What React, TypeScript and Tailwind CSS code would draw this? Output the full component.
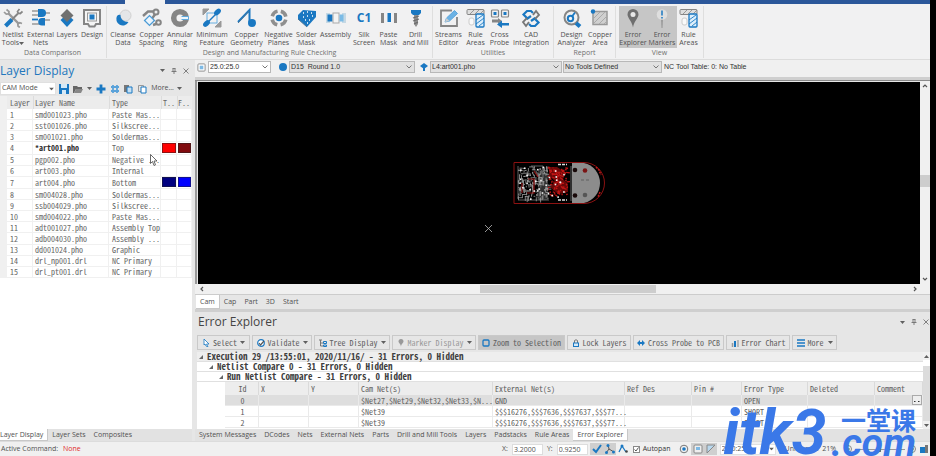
import React from "react";

const MONO = "font-['Noto_Sans_Mono_CJK_SC','Liberation_Mono',monospace]";
const UI = "font-['Open_Sans','Noto_Sans',sans-serif]";
const ARIAL = "font-['Liberation_Sans',Arial,sans-serif]";

const B = "#1a78c2";
const G = "#858585";

type IconProps = { children: React.ReactNode; className?: string; box?: number };

function Icon({ children, className = "size-5", box = 20 }: IconProps) {
  return (
    <svg viewBox={`0 0 ${box} ${box}`} className={`shrink-0 ${className}`} fill="none" aria-hidden="true">
      {children}
    </svg>
  );
}

const icons: Record<string, React.ReactNode> = {
  tools: (
    <>
      <path d="M5 5l11 11" stroke="#999" strokeWidth="2.400" />
      <path d="M3.500 1.500l2.500 2-.3 2.300-2.400.4L1 4M19 15.500l-2.200-.8-2 1 .2 2.300 1.800 1.500" stroke="#999" strokeWidth="1.700" />
      <path d="M16.500 1L14.500 3.500l.8 1.700 2 .3L19.500 3.500" stroke={G} strokeWidth="1.700" />
      <path d="M15 5.500L8.500 12" stroke={G} strokeWidth="2" />
      <path d="M9 11.500L2.500 18" stroke={B} strokeWidth="4" />
    </>
  ),
  nets: (
    <>
      <path d="M1 3h8M1 7h7M11 12h8M1 16h8M14 5h5" stroke="#999" strokeWidth="1.300" />
      <path d="M7 1h4a4 4 0 010 8H7z" fill={B} />
      <path d="M14 10h-3a3.800 3.800 0 000 7.600h3z" fill={B} />
      <path d="M1 11.500h6" stroke={B} strokeWidth="1.800" />
    </>
  ),
  layers: (
    <>
      <path d="M10 6l6.500 6L10 19l-6.500-7z" fill={B} />
      <path d="M10 1l6.500 6.500L10 14 3.500 7.500z" fill="#707070" />
    </>
  ),
  design: (
    <>
      <path d="M2 2h16v14h-4l-1.500 2.500h-5L6 16H2z" fill="#f5f5f5" stroke={G} strokeWidth="2" />
      <rect x="5.500" y="5" width="9" height="8" stroke="#9a9a9a" />
      <rect x="7.500" y="6.500" width="5" height="5" fill={B} />
    </>
  ),
  cleanse: (
    <>
      <circle cx="12.500" cy="7.500" r="5.500" fill="#e4e6e8" stroke="#d0d0d0" />
      <path d="M4 8a6 6 0 0011.500 6C10.500 14 7.500 11 7.500 7 6 6.500 5 7 4 8z" fill={B} />
    </>
  ),
  spacing: (
    <>
      <path d="M1 8l5-4.500h7M11 17l6-2M14 5l-5 7" stroke={G} strokeWidth="2.400" />
      <circle cx="14" cy="4" r="2.500" fill="#eee" stroke={G} strokeWidth="2" />
      <circle cx="16.500" cy="14.500" r="2.300" fill="#eee" stroke={G} strokeWidth="2" />
      <rect x="4" y="9" width="7" height="7" transform="rotate(45 7.500 12.500)" fill="#eaf4fc" stroke="#4b9bd6" strokeWidth="1.300" />
    </>
  ),
  annular: (
    <>
      <circle cx="10" cy="10" r="6.300" stroke={G} strokeWidth="5.500" />
      <path d="M11.500 8.500h7v3h-7" fill="#eef6fc" stroke="#60a8dc" />
    </>
  ),
  minimum: (
    <>
      <path d="M1 7l6-6H1zM19 13l-6 6h6z" stroke="#999" fill="#999" />
      <rect x="5" y="5" width="10" height="10" stroke="#67aee0" />
      <path d="M3 17L17 3" stroke={B} strokeWidth="1.500" />
      <ellipse cx="15.500" cy="4" rx="4" ry="2.600" transform="rotate(-45 15.500 4)" fill={B} />
      <ellipse cx="4.500" cy="15.500" rx="4" ry="2.600" transform="rotate(-45 4.500 15.500)" fill={B} />
    </>
  ),
  geometry: (
    <>
      <path d="M1 14L12.500 2v12" stroke={B} strokeWidth="2" />
      <path d="M1 15L12 3" stroke="#4d7697" />
      <circle cx="15" cy="15" r="4" fill={B} />
    </>
  ),
  negative: (
    <>
      <circle cx="10" cy="10" r="7" stroke="#8f8f8f" strokeWidth="3.500" strokeDasharray="7.600 3.396" strokeDashoffset="9.300" />
      <circle cx="10" cy="10" r="3.300" fill={B} />
    </>
  ),
  solder: (
    <>
      <path d="M1 7l5-5 13 1v6l-9 10L1 11z" fill={B} />
      <path d="M1 11l9 8" stroke="#4d7697" />
      <path d="M6 5h1M10 4h1M14 5h1M6 9h1M10 8h1M15 8h1M8 12h1M12 12h1M10 15h1" stroke="#fff" strokeWidth="1.300" />
    </>
  ),
  assembly: (
    <>
      <path d="M0 5h4v10H0zM16 5h4v10h-4z" fill="#c5d8e4" />
      <rect x="1.500" y="6.500" width="5" height="7" fill={B} />
      <rect x="7" y="5" width="6" height="10" fill="#f4f4f4" stroke="#aaa" />
      <rect x="13.500" y="6.500" width="4" height="7" fill="#7bbbe6" />
    </>
  ),
  paste: (
    <>
      <rect x="2" y="5" width="3" height="10" fill={G} />
      <rect x="8.500" y="5" width="3.500" height="9" fill={B} />
      <rect x="15" y="5" width="3" height="10" fill={G} />
    </>
  ),
  drill: (
    <>
      <path d="M5 2h10v3l-2 2H7L5 5z" fill={B} />
      <path d="M8 7h4v9l-2 3-2-3z" fill="#8f8f8f" />
      <path d="M7 10l6-2M7 13l6-2M8 16l4-2" stroke="#6b6b6b" strokeWidth="1.200" />
    </>
  ),
  streams: (
    <>
      <path d="M13 2.500H2v15.500h16V9" stroke={G} strokeWidth="1.800" />
      <path d="M6 14l1.500-4L15.500 2.500l3 3L10.500 13z" fill="#6cb2e4" stroke="#5aa6dd" />
      <path d="M6 14l1.500-4 3 3z" fill="#ccc" />
    </>
  ),
  rules: (
    <>
      <rect x="1" y="1.500" width="17" height="5" rx="1" fill="#dedede" stroke={G} />
      <path d="M4 6l4-4M9 6l4-4M14 6l4-4" stroke={G} strokeWidth=".8" />
      <rect x="3" y="10" width="5" height="7" rx="2" fill="#fafafa" stroke="#ccc" />
      <rect x="10" y="6" width="8" height="13" rx="1" fill="#dceefb" stroke={B} strokeWidth="1.300" />
      <path d="M10 12l7-5M10 16l8-6M13 18l5-4" stroke={B} strokeWidth=".9" />
    </>
  ),
  probe: (
    <>
      <rect x="1.500" y="2" width="7" height="7" rx="1" stroke={G} strokeWidth="1.200" />
      <rect x="11.500" y="2" width="7" height="7" rx="1" stroke={G} strokeWidth="1.200" />
      <path d="M3.500 4h3v3h-3zM13.500 4h3v3h-3z" fill={B} />
      <path d="M2 11.500h6V10l4 3-4 3v-1.500H2z" fill={G} />
      <path d="M19 15h-7v-2.500L7 16.500l5 3.500v-2.500h7z" fill={B} />
    </>
  ),
  cad: (
    <>
      <path d="M10 8L6.500 10.500 2.500 6.500 6 3h4l2 2" stroke={B} strokeWidth="2.200" />
      <path d="M10 13l3.500-2.500 4 4L14 18h-4l-2-2" stroke={B} strokeWidth="2.200" />
      <path d="M12 7l3-4 3 4-4 4M8 14l-3 4-3-4 4-4" stroke="#777" strokeWidth="1.800" />
    </>
  ),
  analyzer: (
    <>
      <circle cx="9.500" cy="9.500" r="7" stroke={G} strokeWidth="2" />
      <circle cx="8.500" cy="10.500" r="2.700" stroke={B} strokeWidth="2" />
      <path d="M10 8.500l3-4" stroke={B} strokeWidth="1.800" />
      <path d="M14 15l4 3.500" stroke={B} strokeWidth="4" />
    </>
  ),
  area: (
    <>
      <rect x="3" y="3.500" width="14" height="13" fill="#d0d0d0" stroke="#999" strokeWidth="1.500" />
      <path d="M4 10l6-6M4 15L15 4M9 16l8-8M14 16l3-3" stroke="#aaa" />
      <circle cx="3" cy="3.500" r="2.200" fill={B} />
    </>
  ),
  explorer: (
    <>
      <path d="M10 1a5.500 5.500 0 015.500 5.500C15.500 10 11 13 10 19.500 9 13 4.500 10 4.500 6.500A5.500 5.500 0 0110 1z" fill="#6f6f6f" />
      <circle cx="10" cy="6.500" r="2.500" fill="#e8e8e8" />
    </>
  ),
  markers: (
    <>
      <path d="M9 11h2l-.5 9h-1z" fill="#999" />
      <circle cx="10" cy="6.500" r="5.300" fill="#dedede" />
      <path d="M10 2.500v5M10 9v1.500" stroke={B} strokeWidth="1.500" />
    </>
  ),
};

type Tool = { icon: string; a: string; b?: string; w: string; on?: boolean; drop?: boolean };

const groups: { title: string; cls: string; tools: Tool[] }[] = [
  {
    title: "Data Comparison",
    cls: "w-[107px] pr-px",
    tools: [
      { icon: "tools", a: "Netlist", b: "Tools", w: "w-[26px]", drop: true },
      { icon: "nets", a: "External", b: "Nets", w: "w-[29px]" },
      { icon: "layers", a: "Layers", w: "w-[24px]" },
      { icon: "design", a: "Design", w: "w-[26px]" },
    ],
  },
  {
    title: "Design and Manufacturing Rule Checking",
    cls: "w-[326px]",
    tools: [
      { icon: "cleanse", a: "Cleanse", b: "Data", w: "w-[29px]" },
      { icon: "spacing", a: "Copper", b: "Spacing", w: "w-[28px]" },
      { icon: "annular", a: "Annular", b: "Ring", w: "w-[29px]" },
      { icon: "minimum", a: "Minimum", b: "Feature", w: "w-[35px]" },
      { icon: "geometry", a: "Copper", b: "Geometry", w: "w-[34px]" },
      { icon: "negative", a: "Negative", b: "Planes", w: "w-[30px]" },
      { icon: "solder", a: "Solder", b: "Mask", w: "w-[26px]" },
      { icon: "assembly", a: "Assembly", w: "w-[32px]" },
      { icon: "silk", a: "Silk", b: "Screen", w: "w-[25px]" },
      { icon: "paste", a: "Paste", b: "Mask", w: "w-[24px]" },
      { icon: "drill", a: "Drill", b: "and Mill", w: "w-[30px]" },
    ],
  },
  {
    title: "Utilities",
    cls: "w-[121px]",
    tools: [
      { icon: "streams", a: "Streams", b: "Editor", w: "w-[28px]" },
      { icon: "rules", a: "Rule", b: "Areas", w: "w-[26px]" },
      { icon: "probe", a: "Cross", b: "Probe", w: "w-[22px]" },
      { icon: "cad", a: "CAD", b: "Integration", w: "w-[41px]" },
    ],
  },
  {
    title: "Report",
    cls: "w-[62px]",
    tools: [
      { icon: "analyzer", a: "Design", b: "Analyzer", w: "w-[31px]" },
      { icon: "area", a: "Copper", b: "Area", w: "w-[26px]" },
    ],
  },
  {
    title: "View",
    cls: "w-[88px]",
    tools: [
      { icon: "explorer", a: "Error", b: "Explorer", w: "w-[29px]", on: true },
      { icon: "markers", a: "Error", b: "Markers", w: "w-[29px]", on: true },
      { icon: "rules", a: "Rule", b: "Areas", w: "w-[24px]" },
    ],
  },
];

function Ribbon() {
  return (
    <nav aria-label="Ribbon" className="flex h-14 border-b border-[#dcdcdc] bg-[#f1f1f2] text-[7px] leading-[8px] text-[#505050]">
      {groups.map((g) => (
        <section key={g.title} className={`mt-[2px] mb-px flex shrink-0 flex-col items-center border-r border-[#dedede] ${g.cls}`}>
          <div className="flex">
            {g.tools.map((t, i) => (
              <button
                key={i}
                className={`flex h-[42px] flex-col items-center whitespace-nowrap pt-[2px] ${t.w} ${t.on ? "bg-[#c6c6c6]" : ""}`}
              >
                {t.icon === "silk" ? (
                  <span className="flex h-5 items-center text-[12px] font-bold text-[#1a78c2]">C1</span>
                ) : (
                  <Icon>{icons[t.icon]}</Icon>
                )}
                <span className="mt-[3px] flex w-0 justify-center">{t.a}</span>
                {t.b && (
                  <span className="flex w-0 items-center justify-center">
                    {t.b}
                    {t.drop && <Caret />}
                  </span>
                )}
              </button>
            ))}
          </div>
          <h2 className="mt-px whitespace-nowrap text-[#707070]">{g.title}</h2>
        </section>
      ))}
    </nav>
  );
}

function Caret({ className = "" }: { className?: string }) {
  return (
    <svg viewBox="0 0 5 3" className={`h-[3px] w-[5px] shrink-0 ${className}`} aria-hidden="true">
      <path d="M0 0h5L2.500 3z" fill="#606060" />
    </svg>
  );
}

function Combo({ label, value, className, solid }: { label: string; value: string; className: string; solid?: boolean }) {
  return (
    <div className={`relative shrink-0 ${className}`}>
      <select
        aria-label={label}
        className={`block h-full w-full appearance-none border bg-inherit pl-px outline-none ${solid ? "border-[#e0e0e0]" : "border-[#b8b8b8]"}`}
      >
        <option>{value}</option>
      </select>
      {solid ? (
        <Caret className="pointer-events-none absolute right-[2px] top-1/2 -translate-y-1/2" />
      ) : (
        <svg viewBox="0 0 6 4" className="pointer-events-none absolute right-[3px] top-1/2 h-1 w-[6px] -translate-y-1/2" aria-hidden="true">
          <path d="M.5.5L3 3 5.500.5" fill="none" stroke="#777" />
        </svg>
      )}
    </div>
  );
}

function PanelButtons() {
  return (
    <div className="flex h-[20px] items-center gap-[6px] text-[#666]">
      <button aria-label="Panel menu"><Caret className="block" /></button>
      <button aria-label="Pin panel">
        <Icon box={6} className="block size-[6px]"><path d="M1.500.5h3M2 .5v3M4 .5v3M.5 3.500h5M3 3.500v2.500" stroke="#666" strokeWidth=".8" /></Icon>
      </button>
      <button aria-label="Close panel">
        <Icon box={6} className="block size-[6px]"><path d="M.5.5l5 5M5.500.5l-5 5" stroke="#666" strokeWidth=".8" /></Icon>
      </button>
    </div>
  );
}

const layers: [string, string, string?, string?][] = [
  ["smd001023.pho", "Paste Mas..."],
  ["sst001026.pho", "Silkscree..."],
  ["sm001021.pho", "Soldermas..."],
  ["*art001.pho", "Top", "bg-[#ff0000]", "bg-[#800a0e]"],
  ["pgp002.pho", "Negative ..."],
  ["art003.pho", "Internal"],
  ["art004.pho", "Bottom", "bg-[#000080]", "bg-[#0000ff]"],
  ["sm004028.pho", "Soldermas..."],
  ["ssb004029.pho", "Silkscree..."],
  ["smd004022.pho", "Paste Mas..."],
  ["adt001027.pho", "Assembly Top"],
  ["adb004030.pho", "Assembly ..."],
  ["dd001024.pho", "Graphic"],
  ["drl_np001.drl", "NC Primary"],
  ["drl_pt001.drl", "NC Primary"],
];

function Swatch({ color }: { color?: string }) {
  return (
    <td className="border-b border-r border-[#f0f0f0] p-0">
      {color && <div className={`ml-px h-[10px] border border-[#222]/50 ${color}`} />}
    </td>
  );
}

function Tabs({ names, active, className = "" }: { names: string[]; active: string; className?: string }) {
  return (
    <div role="tablist" className={`flex shrink-0 whitespace-nowrap text-[7px] leading-[8px] text-[#505050] ${className}`}>
      {names.map((n) => (
        <button
          key={n}
          role="tab"
          aria-selected={n === active}
          className={`h-full px-1 ${n === active ? "border-r border-b border-[#c8c8c8] bg-white" : ""}`}
        >
          {n}
        </button>
      ))}
    </div>
  );
}

function LayerPanel() {
  return (
    <aside className="flex w-[192px] shrink-0 flex-col bg-white">
      <header className="flex h-[21px] items-center justify-between bg-[#e6e6e6] pr-[3px]">
        <h1 className="text-[12px] leading-[20px] text-[#2277bd]">Layer Display</h1>
        <PanelButtons />
      </header>
      <div className="flex h-[15px] items-center bg-[#e6e6e6] text-[7px] text-[#505050]">
        <Combo label="Display mode" value="CAM Mode" className="h-[13px] w-[56px] bg-white" solid />
        <div className="flex flex-1 items-center justify-between pl-[3px] pr-[10px]">
          <button aria-label="Save">
            <Icon box={10} className="block size-[10px]"><path d="M0 0h10v10H0z" fill={B} /><path d="M2 0h6v4H2zM3 6h4v4H3z" fill="#d5e9f7" /></Icon>
          </button>
          <button aria-label="Open">
            <Icon box={10} className="block size-[10px]"><path d="M0 2h4l1 1h4v2H3L1 9H0z" fill="#666" /><path d="M3 5h7L8 9H1z" fill="#888" /></Icon>
          </button>
          <button aria-label="Open menu"><Caret className="block" /></button>
          <button aria-label="Add layer">
            <Icon box={10} className="block size-[10px]"><path d="M5 .5v9M.5 5h9" stroke={B} strokeWidth="2.800" /></Icon>
          </button>
          <button aria-label="Renumber">
            <Icon box={10} className="block size-[10px]"><path d="M3 1v8M7 1v8M1 3h8M1 7h8" stroke="#5ba3da" strokeWidth="1.800" /></Icon>
          </button>
          <button aria-label="Copy">
            <Icon box={10} className="block size-[10px]"><path d="M1 1h5v7H1z" fill="#777" /><path d="M4 3h5v6H4z" fill="#c7e1f4" stroke={B} /></Icon>
          </button>
          <button aria-label="Paste">
            <Icon box={10} className="block size-[10px]"><path d="M1.500 1.500h5v6h-5z" stroke="#999" /><path d="M4 3h5v6H4z" fill="#fff" stroke={B} /></Icon>
          </button>
          <button className="flex items-center gap-[3px]">More...<Caret /></button>
        </div>
      </div>
      <div className={`flex ${MONO} text-[8px] leading-[9px] text-[#666]`}>
        <div className="w-[7px] shrink-0 bg-[#f0f0f0]" />
        <table className="h-[182px] w-full table-fixed border-separate border-spacing-0 whitespace-nowrap text-left">
          <thead className="bg-[#ececec]">
            <tr className="h-[13px]">
              <th className="w-[26px] p-0 pl-[3px] font-normal">Layer</th>
              <th className="w-[76px] border-l border-[#dcdcdc] p-0 pl-px font-normal">Layer Name</th>
              <th className="border-l border-[#dcdcdc] p-0 pl-[2px] font-normal">Type</th>
              <th className="w-[16px] border-l border-[#dcdcdc] p-0 pl-px font-normal">T..</th>
              <th className="w-[15px] border-l border-[#dcdcdc] p-0 font-normal">F..</th>
            </tr>
          </thead>
          <tbody>
            {layers.map(([name, type, t, f], i) => (
              <tr key={name}>
                <td className="border-b border-r border-[#f0f0f0] p-0 pl-[3px]">{i + 1}</td>
                <td className={`border-b border-r border-[#f0f0f0] p-0 pl-[2px] ${i === 3 ? "font-bold text-[#333]" : ""}`}>{name}</td>
                <td className="border-b border-r border-[#f0f0f0] p-0 pl-[3px]">{type}</td>
                <Swatch color={t} />
                <Swatch color={f} />
              </tr>
            ))}
          </tbody>
        </table>
      </div>
      <div className="flex-1" />
      <div className="bg-[#e2e2e2]">
        <Tabs names={["Layer Display", "Layer Sets", "Composites"]} active="Layer Display" className="-ml-1 h-[12px]" />
      </div>
    </aside>
  );
}

// Deterministic pseudo-random values for the copper traces
function makeRandom(seed: number) {
  let s = seed;
  return () => {
    s = (s * 16807) % 2147483647;
    return s / 2147483647;
  };
}

function Board() {
  const r = makeRandom(77);
  const white = Array.from({ length: 190 }, () => {
    const x = -41 + r() * 30;
    const y = -17 + r() * 32;
    return `M${x.toFixed(1)} ${y.toFixed(1)}${r() > 0.3 ? "v" : "h"}${(1 + r() * 4).toFixed(1)}`;
  }).join("");
  const red = Array.from({ length: 80 }, () => {
    const x = -11 + r() * 19;
    const y = -16 + r() * 28;
    return `M${x.toFixed(1)} ${y.toFixed(1)}l${(r() * 5 - 1).toFixed(1)} ${(r() * 5 - 2).toFixed(1)}`;
  }).join("");
  const dots = Array.from({ length: 30 }, () => [-41 + r() * 50, -17 + r() * 33]);
  return (
    <svg viewBox="-75 -50 150 100" className="h-[100px] w-[150px]" fill="none" role="img" aria-label="Board art001.pho">
      <path d="M13-20H25a20.500 20.500 0 010 40H13z" fill="#8c8c8c" />
      <path d="M-45-20.500H25a20.500 20.500 0 010 41H-45z" stroke="#8c1212" />
      <path d="M-41 17h31M-41-17V16M-28-17h12V-5M-20 17V-14M-18 17V-10M-16 17V-12M-14 17V-8M-12 17v-30M12-17v35" stroke="#8a8a8a" strokeWidth=".7" />
      <path d={white} stroke="#a0a0a0" strokeWidth=".8" />
      <path d="M-37 0v10M-31-4h6v14h-7M-25-12l4 6" stroke="#8e1212" strokeWidth="1.200" />
      <path d="M-10-16h8l9 6-3 6 5 5v8l-10 2-8-7 5-6-6-5z" fill="#6a0808" />
      <path d={red} stroke="#c01414" strokeWidth="1.300" />
      {dots.map(([x, y], i) => (
        <rect key={i} x={x} y={y} width={1.6} height={1.6} fill="#f4f4f4" />
      ))}
      <path d="M-1-18.500h9M-1 17h9" stroke="#ddd" strokeWidth="1.500" strokeDasharray="3 1" />
      <circle cx="16" cy="-13" r="2.300" fill="#180808" />
      <circle cx="26" cy="-12.500" r="2.300" fill="#7b1515" />
      <circle cx="16" cy="12.500" r="2.300" fill="#180808" />
      <circle cx="26" cy="12" r="2.300" fill="#555" />
      <path d="M22-3h3M27-3h3" stroke="#555" strokeWidth=".8" />
      <path d="M37-16l3 3 2 5M41 9l-2 5" stroke="#c01818" strokeDasharray="2 1" strokeWidth="1.500" />
      <path d="M-74 42l7 7M-67 42l-7 7" stroke="#bbb" strokeWidth=".8" />
    </svg>
  );
}

function Chevron({ d }: { d: string }) {
  return <Icon box={6} className="size-[6px]"><path d={d} stroke="#555" strokeWidth="1.200" /></Icon>;
}

const tb = "flex h-[15px] shrink-0 items-center justify-center gap-[3px] whitespace-nowrap border border-[#c9c9c9]";

function ErrorToolbar() {
  return (
    <div className={`flex items-center gap-[2px] ${MONO} text-[8px] leading-[9px] text-[#606060]`}>
      <button className={`${tb} w-[53px]`}>
        <Icon box={8} className="size-2"><path d="M2 0l5 5H4.500L6 8 4 7 3 5 2 6z" fill="#fff" stroke={B} strokeWidth=".8" /></Icon>Select<Caret />
      </button>
      <button className={`${tb} w-[60px]`}>
        <Icon box={8} className="size-2"><circle cx="4" cy="4" r="3.300" fill="#fff" stroke={B} strokeWidth="1.200" /><path d="M2 4l1.500 2L7 2" stroke="#555" strokeWidth="1.200" /></Icon>Validate<Caret />
      </button>
      <button className={`${tb} w-[76px]`}>
        <Icon box={8} className="size-2"><path d="M0 1h3M1.500 1v6H4M1.500 4H4" stroke="#777" /><path d="M4.500 2.500h3v2h-3zM4.500 6h3v1.500h-3z" stroke={B} /></Icon>Tree Display<Caret />
      </button>
      <button disabled className={`${tb} w-[84px] text-[#999]`}>
        <Icon box={8} className="size-2"><path d="M4 0a2.500 2.500 0 012.500 2.500C6.500 4 4 5 4 8c0-3-2.500-4-2.500-5.500A2.500 2.500 0 014 0z" fill="#999" /></Icon>Marker Display<Caret />
      </button>
      <button aria-pressed="true" className={`${tb} w-[87px] bg-[#c6c6c6]`}>
        <Icon box={8} className="size-2"><rect x="1" y="1" width="6" height="6" rx="1" stroke={B} strokeWidth="1.300" /></Icon>Zoom to Selection
      </button>
      <button className={`${tb} w-[64px]`}>
        <Icon box={8} className="size-2"><path d="M2.500 4V1.500q1.500-1.500 3 0V4" stroke="#777" /><rect x="1.500" y="4" width="5" height="3.500" fill="#d5e9f7" stroke={B} /></Icon>Lock Layers
      </button>
      <button className={`${tb} w-[91px]`}>
        <Icon box={8} className="size-2"><path d="M0 4l3-3v2h2V1l3 3-3 3V5H3v2z" fill={B} /></Icon>Cross Probe to PCB
      </button>
      <button className={`${tb} w-[64px]`}>
        <Icon box={8} className="size-2"><path d="M1.500 8V4" stroke="#999" strokeWidth="1.500" /><path d="M4 8V2" stroke={B} strokeWidth="2" /><path d="M7 8V1" stroke="#888" /></Icon>Error Chart
      </button>
      <button className={`${tb} w-[45px]`}>
        <Icon box={8} className="size-2"><path d="M0 1h8M0 4h8M0 7h8" stroke={B} strokeWidth="1.500" /></Icon>More<Caret className="ml-px" />
      </button>
    </div>
  );
}

const tree: [string, string][] = [
  ["Execution 29 /13:55:01, 2020/11/16/ - 31 Errors, 0 Hidden", "pl-[2px]"],
  ["Netlist Compare 0 - 31 Errors, 0 Hidden", "pl-[12px]"],
  ["Run Netlist Compare - 31 Errors, 0 Hidden", "pl-[22px]"],
];

const errors = [
  ["0", "$Net27,$Net29,$Net32,$Net33,$N...", "GND", "OPEN"],
  ["1", "$Net39", "$$$16276,$$$7636,$$$7637,$$$77...", "SHORT"],
  ["2", "$Net39", "$$$16276,$$$7636,$$$7637,$$$77...", "SHORT"],
];

const columns: [string, string][] = [
  ["Id", "w-[34px] text-center"],
  ["X", "w-[50px]"],
  ["Y", "w-[50px]"],
  ["Cam Net(s)", "w-[134px]"],
  ["External Net(s)", "w-[132px]"],
  ["Ref Des", "w-[67px]"],
  ["Pin #", "w-[50px]"],
  ["Error Type", "w-[66px]"],
  ["Deleted", "w-[67px]"],
  ["Comment", ""],
];

function ErrorPanel() {
  return (
    <section className="bg-[#e6e6e6] pl-[2px]">
      <header className="flex h-[23px] items-start justify-between pr-px">
        <h1 className="pl-px text-[12px] leading-[20px] text-[#444]">Error Explorer</h1>
        <PanelButtons />
      </header>
      <ErrorToolbar />
      <div className={`mt-[2px] flex ${MONO} text-[8px] leading-[9px] text-[#606060]`}>
        <div className="min-w-0 flex-1 bg-white pb-px">
          {tree.map(([label, pad], i) => (
            <div key={label} className={`flex h-[10px] items-center gap-1 whitespace-nowrap border-b border-[#e0e0e0] text-[9px] font-bold text-[#404040] ${pad} ${i === 0 ? "bg-[#eeeeee]" : ""}`}>
              <Icon box={4} className="size-1"><path d="M4 0v4H0z" fill="#666" /></Icon>
              {label}
            </div>
          ))}
          <div className="pl-[28px]">
            <table className="w-full table-fixed border-separate border-spacing-0 whitespace-nowrap text-left">
              <thead className="bg-[#ededed]">
                <tr className="h-[13px]">
                  {columns.map(([c, w]) => (
                    <th key={c} className={`border-r border-[#dadada] p-0 pl-[2px] font-normal ${w}`}>{c}</th>
                  ))}
                </tr>
              </thead>
              <tbody>
                {errors.map(([id, cam, ext, type], i) => (
                  <tr key={id} className={`h-[11px] ${i === 0 ? "bg-[#dedede]" : ""}`}>
                    {[id, "", "", cam, ext, "", "", type, "", ""].map((v, j) => (
                      <td key={j} className={`border-b border-r border-[#eaeaea] p-0 pl-[2px] ${j === 0 ? "text-center" : ""}`}>
                        {i === 0 && j === 9 ? (
                          <button aria-label="Edit comment" className="ml-auto flex h-[10px] w-[10px] items-center justify-center border border-[#aaa] bg-[#eee]">
                            <Icon box={6} className="size-[6px]"><path d="M0 4.500h1.500M4 4.500h1.500" stroke="#333" /></Icon>
                          </button>
                        ) : v}
                      </td>
                    ))}
                  </tr>
                ))}
              </tbody>
            </table>
          </div>
        </div>
        <div className="flex w-[7px] shrink-0 flex-col items-center bg-[#f0f0f0]">
          <div className="flex h-[8px] w-full items-center justify-center"><Caret className="rotate-180" /></div>
          <div className="h-[6px] w-full bg-white" />
          <div className="w-full flex-1 bg-[#dcdcdc]" />
          <div className="flex h-[8px] w-full items-center justify-center"><Caret /></div>
        </div>
      </div>
      <Tabs
        names={["System Messages", "DCodes", "Nets", "External Nets", "Parts", "Drill and Mill Tools", "Layers", "Padstacks", "Rule Areas", "Error Explorer"]}
        active="Error Explorer"
        className="-ml-[2px] h-[12px] bg-[#e2e2e2]"
      />
    </section>
  );
}

function StatusBar() {
  return (
    <footer className="flex h-[15px] items-center border-t border-[#dcdcdc] bg-[#f0f0f0] text-[7px] leading-[8px] text-[#505050]">
      <p className="w-[502px] shrink-0 pl-px">Active Command: <span className="ml-[3px] text-[#e02b2b]">None</span></p>
      <label className="flex items-center gap-[4px]">X:
        <input defaultValue="3.2000" className="h-[11px] w-[31px] border border-[#ddd] bg-white pl-px" />
      </label>
      <label className="ml-[4px] flex items-center gap-[4px]">Y:
        <input defaultValue="0.9250" className="h-[11px] w-[31px] border border-[#ddd] bg-white pl-px" />
      </label>
      <div className="ml-[2px] flex">
        <button aria-label="Snap" className="bg-[#cfcfcf] px-[2px] py-px"><Icon box={10} className="block size-[10px]"><path d="M1 5l3 3 5-7" stroke={B} strokeWidth="2" /></Icon></button>
        <button aria-label="Snap to net" className="bg-[#cfcfcf] px-px py-px"><Icon box={10} className="block size-[10px]"><path d="M3 1l1 4-3 4M4 5l5 3" stroke="#555" /><circle cx="3" cy="1.500" r="1.500" fill={B} /><circle cx="1.500" cy="8.500" r="1.500" fill={B} /><circle cx="8.500" cy="8" r="1.500" fill={B} /></Icon></button>
        <button aria-label="Snap to vertex" className="px-[2px] py-px"><Icon box={10} className="block size-[10px]"><path d="M1 8l3-6 4 6" stroke={B} strokeWidth="1.300" /><circle cx="4" cy="2" r="1.500" fill={B} /><circle cx="8.500" cy="7.500" r="1.300" fill="#444" /></Icon></button>
      </div>
      <label className="relative ml-[3px] flex items-center gap-[3px] text-[#333]">
        <input type="checkbox" defaultChecked className="size-[7px] appearance-none border border-[#888] bg-white" />
        <Icon box={7} className="pointer-events-none absolute left-0 size-[7px]"><path d="M1.500 3.500L3 5l2.500-3.500" stroke="#444" strokeWidth=".9" /></Icon>
        Autopan
      </label>
      <div className="ml-[7px] flex">
        <button aria-label="Origin" className="px-px"><Icon box={10} className="block size-[10px]"><circle cx="5" cy="5" r="3.800" stroke="#777" /><circle cx="5" cy="5" r="1.800" fill={B} /></Icon></button>
        <button aria-label="Frame" className="ml-px bg-[#cfcfcf] px-[2px] py-px"><Icon box={10} className="block size-[10px]"><rect x="1" y="1" width="8" height="8" rx="1" fill="#eee" stroke="#888" /><path d="M3 3h4v3H3z" fill="#7db9e4" /></Icon></button>
        <button aria-label="Grid" className="bg-[#cfcfcf] px-px py-px"><Icon box={10} className="block size-[10px]"><path d="M1 1h8L1 9z" fill="#b9d8ee" /><path d="M9 1L1 9M1 9V1h8" stroke="#888" /></Icon></button>
      </div>
      <Combo label="Grid" value="25.0:25.0" className="ml-[3px] h-[11px] w-[56px] bg-white" solid />
      <span className="ml-[9px] whitespace-nowrap">Units: mils</span>
      <span className="ml-auto">21%</span>
      <button aria-label="Zoom out" className="ml-[8px]"><Icon box={8} className="block size-2"><circle cx="4" cy="4" r="3.500" stroke="#888" /><path d="M2 4h4" stroke="#666" /></Icon></button>
      <input
        type="range"
        aria-label="Zoom"
        className="mx-[3px] h-px w-[50px] appearance-none bg-[#999] [&::-webkit-slider-thumb]:h-[5px] [&::-webkit-slider-thumb]:w-[2px] [&::-webkit-slider-thumb]:appearance-none [&::-webkit-slider-thumb]:bg-[#777]"
      />
      <button aria-label="Zoom in"><Icon box={8} className="block size-2"><circle cx="4" cy="4" r="3.500" stroke="#888" /><path d="M2 4h4M4 2v4" stroke="#666" /></Icon></button>
      <button aria-label="Fit" className="ml-[4px] mr-[2px]"><Icon box={8} className="block size-2"><path d="M0 2h5v6H0z" fill={B} /><path d="M5 0h3v8H5z" fill="#777" /></Icon></button>
    </footer>
  );
}

export default function App() {
  return (
    <div className="relative min-h-screen overflow-hidden bg-black pr-[6px]">
      <div className={`flex min-h-screen flex-col bg-[#e6e6e6] ${UI}`}>
        <div className="flex h-1 bg-[#2b579a]"><div className="ml-[125px] w-[40px] bg-[#f1f1f2]" /></div>
        <Ribbon />
        <div className="flex flex-1">
          <LayerPanel />
          <main className="ml-[3px] flex min-w-0 flex-1 flex-col">
            <div className={`flex h-[17px] items-center bg-[#f0f0f0] pb-[3px] pl-[2px] text-[7px] leading-[8px] text-[#303030] ${ARIAL}`}>
              <Icon box={10} className="size-[9px]"><rect x="1" y="1" width="8" height="8" rx="1" fill="#fff" stroke="#888" /><path d="M3 3h4v4H3z" fill="#7db9e4" /></Icon>
              <Combo label="Grid spacing" value="25.0:25.0" className="ml-[2px] h-[12px] w-[63px] bg-white" />
              <Icon box={8} className="ml-[8px] mr-[2px] size-2"><circle cx="4" cy="4" r="4" fill={B} /></Icon>
              <Combo label="D-code" value={"D15\u00a0 Round 1.0"} className="h-[12px] w-[126px] bg-[#e1e1e1]" />
              <Icon box={8} className="ml-[5px] mr-[2px] size-2"><path d="M4 0l4 3-4 3-4-3z" fill={B} /><path d="M4 5v3" stroke={B} strokeWidth="2" /></Icon>
              <Combo label="Layer" value="L4:art001.pho" className="h-[12px] w-[132px] bg-[#e1e1e1]" />
              <Combo label="Tool" value="No Tools Defined" className="ml-px h-[12px] w-[99px] bg-[#e1e1e1]" />
              <span className="ml-[2px] whitespace-nowrap">NC Tool Table: 0: No Table</span>
            </div>
            <div className="h-1 border-b border-[#8a8a8a] bg-[#cfcfcf]" />
            <div className="flex min-h-[120px] flex-1 border-l-2 border-[#999]">
              <div className="mt-px ml-px flex flex-1 items-center justify-center bg-black"><Board /></div>
              <div className="flex w-[10px] flex-col items-center justify-between bg-[#f0f0f0] py-[2px]">
                <Chevron d="M1 4l2-2 2 2" />
                <div className="mb-1 h-[12px] w-full bg-[#cdcdcd]" />
                <Chevron d="M1 2l2 2 2-2" />
              </div>
            </div>
            <div className="flex h-[10px] items-center justify-between bg-[#f0f0f0] pl-[4px] pr-[12px]">
              <Chevron d="M4 1L2 3l2 2" />
              <div className="ml-[18px] h-[8px] w-[176px] bg-[#cdcdcd]" />
              <Chevron d="M2 1l2 2-2 2" />
            </div>
            <Tabs names={["Cam", "Cap", "Part", "3D", "Start"]} active="Cam" className="h-[15px] border-t border-[#ccc] pl-px" />
            <div className="h-[3px] bg-[#cfcfcf]" />
            <ErrorPanel />
          </main>
        </div>
        <StatusBar />
      </div>
      <svg viewBox="0 0 8 12" className="absolute left-[150px] top-[154px] h-3 w-2" aria-hidden="true">
        <path d="M.5.5v9l2-2 1.500 4 1.500-.7L4 7h3z" fill="#fff" stroke="#444" strokeWidth=".8" />
      </svg>
      <div className="pointer-events-none absolute bottom-0 right-[20px] flex items-end gap-[5px] font-['Roboto',sans-serif] font-bold italic text-[#3a78e8]">
        <span className="text-[62px] leading-[46px]">itk3</span>
        <span className="flex flex-col items-end">
          <span className="font-['Noto_Sans_CJK_SC',sans-serif] text-[25px] not-italic leading-[22px]">一堂课</span>
          <span className="text-[39px] leading-[26px]">.com</span>
        </span>
      </div>
    </div>
  );
}
